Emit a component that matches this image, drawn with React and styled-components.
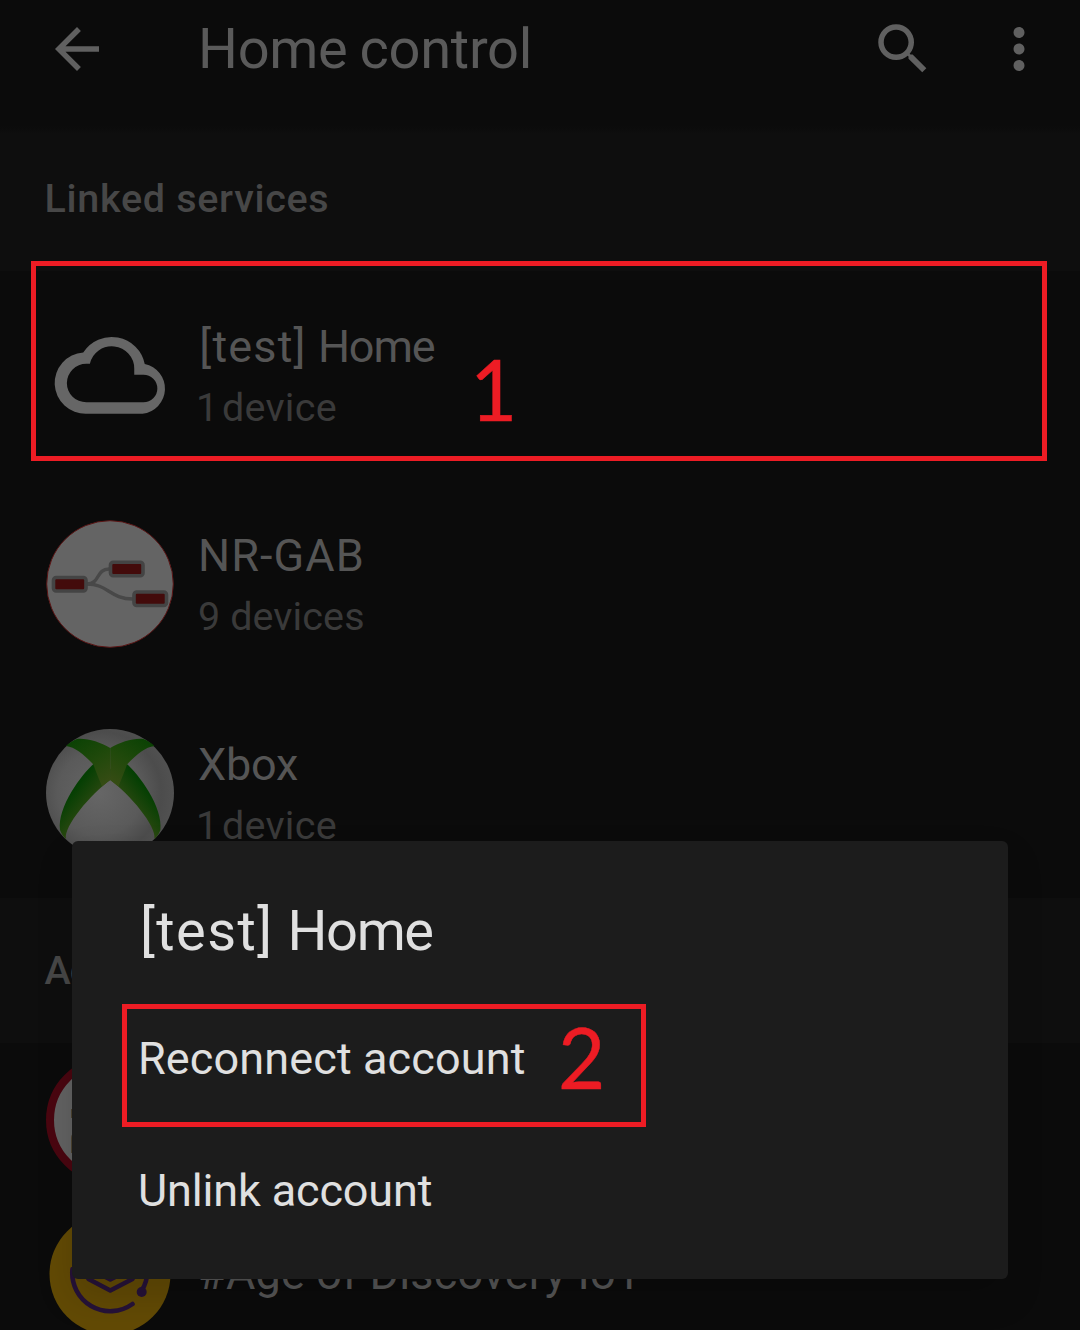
import React from "react";
import styled, { createGlobalStyle } from "styled-components";

const GlobalStyle = createGlobalStyle`
  * { box-sizing: border-box; }
  html, body { margin: 0; padding: 0; background: #0b0b0b; }
  body { overflow: hidden; }
`;

const Screen = styled.div`
  position: relative;
  width: 1080px;
  height: 1330px;
  overflow: hidden;
  display: flex;
  flex-direction: column;
  background: #0b0b0b;
  font-family: Roboto, "Liberation Sans", sans-serif;
  white-space: nowrap;
`;

const TopBar = styled.header`
  flex: none;
  display: flex;
  align-items: center;
  height: 126px;
  padding: 0 28px 28px 44px;
  color: #606060;
`;

const Icon = styled.svg`
  flex: none;
  display: block;
  width: 66px;
  height: 66px;
  fill: currentColor;
`;

const Title = styled.h1`
  flex: 1;
  margin: 0 0 0 88px;
  font-size: 56px;
  font-weight: 400;
  line-height: 66px;
  letter-spacing: -0.3px;
  word-spacing: -1.5px;
  color: #5a5a5a;
`;

const Actions = styled.div`
  display: flex;
  gap: 50px;
`;

const SectionHeader = styled.h2`
  flex: none;
  display: flex;
  align-items: center;
  height: 145px;
  margin: 0;
  padding-left: 44.5px;
  background: ${(p) => (p.$faded ? "linear-gradient(#0b0b0b, #0e0e0e 8px)" : "#0e0e0e")};
  color: #474747;
  font-size: 39.5px;
  font-weight: 500;
  letter-spacing: ${(p) => p.$track}px;
`;

const List = styled.div`
  flex: none;
  display: flex;
  flex-direction: column;
`;

const Row = styled.div`
  flex: none;
  display: flex;
  align-items: center;
  gap: 24px;
  height: ${(p) => (p.$compact ? 155 : 209)}px;
  padding-left: 46px;
`;

const Avatar = styled.svg`
  flex: none;
  display: block;
  width: 128px;
  height: 128px;
  margin-bottom: 2px;
`;

const RowText = styled.div`
  display: flex;
  flex-direction: column;
  padding-top: ${(p) => (p.$compact ? 0 : 3)}px;
  padding-bottom: ${(p) => (p.$compact ? 4 : 0)}px;
`;

const Name = styled.span`
  font-size: 45px;
  line-height: 61px;
  padding-left: ${(p) => p.$indent || 0}px;
  letter-spacing: ${(p) => p.$track || 0}px;
  color: #555;
`;

const Word = styled.span`
  letter-spacing: ${(p) => p.$track}em;
`;

const Detail = styled.span`
  font-size: 39.5px;
  line-height: 61px;
  margin-left: ${(p) => (p.$gap ? -2 : 0)}px;
  letter-spacing: ${(p) => p.$track || 0}px;
  word-spacing: ${(p) => p.$gap || 0}px;
  color: #3a3a3a;
`;

const Dialog = styled.section`
  position: absolute;
  left: 72px;
  top: 841px;
  width: 936px;
  height: 438px;
  padding: 42px 66px 22px;
  display: flex;
  flex-direction: column;
  border-radius: 6px;
  background: #1c1c1c;
  color: #e0e0e0;
  box-shadow: 0 18px 36px rgba(0, 0, 0, 0.15);
`;

const DialogTitle = styled.h2`
  margin: 0 0 14px;
  padding-left: 2px;
  font-size: 56px;
  font-weight: 400;
  line-height: 96px;
`;

const DialogItem = styled.div`
  font-size: 45px;
  line-height: 132px;
  letter-spacing: ${(p) => p.$track || 0}px;
`;

const Highlight = styled.div`
  position: absolute;
  left: ${(p) => p.$x}px;
  top: ${(p) => p.$y}px;
  width: ${(p) => p.$w}px;
  height: ${(p) => p.$h}px;
  border: 5px solid #ed1c24;
`;

const StepNumber = styled.span`
  position: absolute;
  left: ${(p) => p.$x}px;
  top: ${(p) => p.$y}px;
  font-family: Lato, "Open Sans", sans-serif;
  font-size: 85px;
  line-height: 100px;
  color: #ed1c24;
  -webkit-text-stroke: 0.5px #ed1c24;
  transform: scaleX(0.96);
  transform-origin: 0 0;
`;

const ServiceName = () => (
  <>
    <Word $track={0.026}>[test]</Word> <Word $track={-0.025}>Home</Word>
  </>
);

const CloudAvatar = () => (
  <Avatar viewBox="0 0 128 128">
    <path
      transform="translate(9.7 24.3) scale(1.02 1.01)"
      fill="#666"
      fillRule="evenodd"
      d="M27 17A33 33 0 0 1 87.3 28.4A25 25 0 0 1 85 77.7H30A30.4 30.4 0 0 1 27 17ZM33.5 28.2H30A19 19 0 0 0 30 66.3H86A13.65 13.65 0 0 0 86 39H77V33A22 22 0 0 0 33.5 28.2Z"
    />
  </Avatar>
);

const NodeRedAvatar = () => (
  <Avatar viewBox="0 0 128 128">
    <circle cx="64" cy="64" r="63.3" fill="#646464" stroke="#5a1414" strokeWidth="1" />
    <g fill="none" stroke="#484848" strokeWidth="3.4">
      <path d="M41 64C54 64 50 49 63 49" />
      <path d="M41 64C62 64 64 79 87 79" />
    </g>
    <g fill="#430b0b" stroke="#444" strokeWidth="3.6">
      <rect x="7.5" y="57.5" width="32.5" height="13.5" rx="2.8" />
      <rect x="64.5" y="42.3" width="32.5" height="13.5" rx="2.8" />
      <rect x="88" y="72" width="32.5" height="13.5" rx="2.8" />
    </g>
  </Avatar>
);

const XboxHalf = () => (
  <>
    <path
      fill="url(#leg)"
      d="M48 34.5C36 45 11 78 14 101C15.5 105 17.5 108 20 110C17.5 97 45 65 64.2 51V40Z"
    />
    <path
      fill="url(#arm)"
      d="M20 17C23 14 27 11.5 31 10C41 9 54 13 64.2 19V51L56 57.5C53 50 50 43 47.3 35.3C37 25 29 18 20 17Z"
    />
  </>
);

const XboxAvatar = () => (
  <Avatar viewBox="0 0 128 128">
    <defs>
      <radialGradient id="ball" cx="0.42" cy="0.5" r="0.6">
        <stop offset="0" stopColor="#666" />
        <stop offset="0.55" stopColor="#5a5a5a" />
        <stop offset="0.8" stopColor="#4c4c4c" />
        <stop offset="1" stopColor="#525252" />
      </radialGradient>
      <linearGradient id="arm" gradientUnits="userSpaceOnUse" x1="30" y1="10" x2="60" y2="56">
        <stop offset="0" stopColor="#0b4204" />
        <stop offset="0.5" stopColor="#20490b" />
        <stop offset="1" stopColor="#374c14" />
      </linearGradient>
      <linearGradient id="leg" gradientUnits="userSpaceOnUse" x1="24" y1="66" x2="42" y2="80">
        <stop offset="0" stopColor="#053f03" />
        <stop offset="1" stopColor="#2a4810" />
      </linearGradient>
    </defs>
    <circle cx="64" cy="64" r="64" fill="url(#ball)" />
    <XboxHalf />
    <g transform="matrix(-1 0 0 1 128.4 0)">
      <XboxHalf />
    </g>
  </Avatar>
);

const RingAvatar = () => (
  <Avatar viewBox="0 0 128 128">
    <circle cx="64" cy="64" r="60" fill="#626262" stroke="#4a0610" strokeWidth="8" />
    <path d="M25 53h8v9h-8zM25 82q0-5 5-5h6v20h-11z" fill="#4c422f" />
  </Avatar>
);

const ScholarAvatar = () => (
  <Avatar viewBox="0 0 128 128">
    <circle cx="64" cy="63" r="60.5" fill="#624a05" />
    <g fill="none" stroke="#261238" strokeWidth="4.6" strokeLinecap="round" strokeLinejoin="round">
      <path d="M86.5 93A38 38 0 0 1 26.5 58" />
      <path d="M42.5 68L64.3 79.5L86.5 68" />
      <path d="M42.5 57L64.3 68.5L86.5 57L64.3 46Z" />
      <path d="M96 79Q101 71 101.5 60" />
    </g>
    <circle cx="95.7" cy="81" r="5" fill="#261238" />
  </Avatar>
);

export default function App() {
  return (
    <>
      <GlobalStyle />
      <Screen>
        <TopBar>
          <Icon viewBox="0 0 24 24">
            <path d="M20 11H7.83l5.59-5.59L12 4l-8 8 8 8 1.41-1.41L7.83 13H20v-2z" />
          </Icon>
          <Title>Home control</Title>
          <Actions>
            <Icon viewBox="0 0 24 24">
              <path d="M15.5 14h-.79l-.28-.27A6.471 6.471 0 0 0 16 9.5 6.5 6.5 0 1 0 9.5 16c1.61 0 3.09-.59 4.23-1.57l.27.28v.79l5 4.99L20.49 19l-4.99-5zm-6 0C7.01 14 5 11.99 5 9.5S7.01 5 9.5 5 14 7.01 14 9.5 11.99 14 9.5 14z" />
            </Icon>
            <Icon viewBox="0 0 24 24">
              <path d="M12 8c1.1 0 2-.9 2-2s-.9-2-2-2-2 .9-2 2 .9 2 2 2zm0 2c-1.1 0-2 .9-2 2s.9 2 2 2 2-.9 2-2-.9-2-2-2zm0 6c-1.1 0-2 .9-2 2s.9 2 2 2 2-.9 2-2-.9-2-2-2z" />
            </Icon>
          </Actions>
        </TopBar>

        <SectionHeader $faded $track={0.7}>Linked services</SectionHeader>
        <List>
          <Row>
            <CloudAvatar />
            <RowText>
              <Name $indent={1.3}><ServiceName /></Name>
              <Detail $track={0.25} $gap={-6.5}>1 device</Detail>
            </RowText>
          </Row>
          <Row>
            <NodeRedAvatar />
            <RowText>
              <Name $track={1.1}>NR-GAB</Name>
              <Detail $track={0.1}>9 devices</Detail>
            </RowText>
          </Row>
          <Row>
            <XboxAvatar />
            <RowText>
              <Name $track={-0.2}>Xbox</Name>
              <Detail $track={0.25} $gap={-6.5}>1 device</Detail>
            </RowText>
          </Row>
        </List>

        <SectionHeader $track={-1}>Add</SectionHeader>
        <List>
          <Row $compact>
            <RingAvatar />
          </Row>
          <Row $compact>
            <ScholarAvatar />
            <RowText $compact>
              <Name $track={0.2}>#Age of Discovery IoT</Name>
            </RowText>
          </Row>
        </List>

        <Dialog>
          <DialogTitle><ServiceName /></DialogTitle>
          <DialogItem $track={0.12}>Reconnect account</DialogItem>
          <DialogItem $track={-0.15}>Unlink account</DialogItem>
        </Dialog>

        <Highlight $x={31} $y={261} $w={1016} $h={200} />
        <StepNumber $x={469.5} $y={338}>1</StepNumber>
        <Highlight $x={122} $y={1004} $w={524} $h={123} />
        <StepNumber $x={557.5} $y={1006}>2</StepNumber>
      </Screen>
    </>
  );
}
